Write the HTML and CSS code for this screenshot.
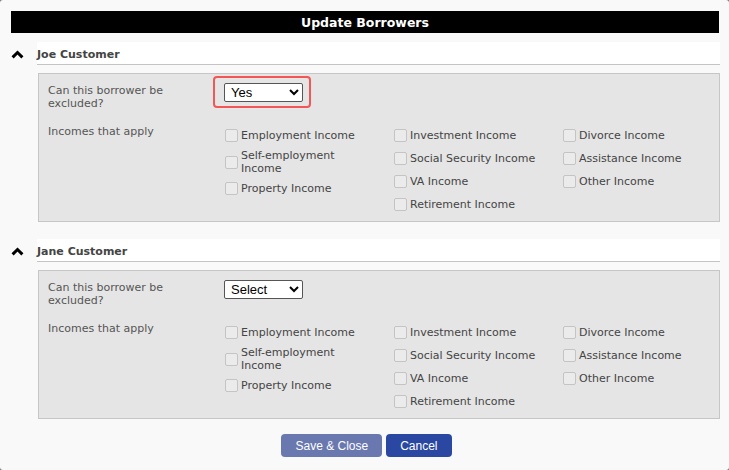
FILE: index.html
```html
<!DOCTYPE html>
<html>
<head>
<meta charset="utf-8">
<link rel="stylesheet" href="styles.css">
</head>
<body>
<div class="dialog">
  <div class="titlebar">Update Borrowers</div>

  <section class="borrower">
    <div class="toggle"><svg width="13" height="9" viewBox="0 0 13 9"><polyline points="1.6,7.4 6.5,2.5 11.4,7.4" fill="none" stroke="#000" stroke-width="3"/></svg></div>
    <div class="content">
      <div class="bhead">Joe Customer</div>
      <div class="box">
        <div class="lbl">Can this borrower be excluded?</div>
        <div class="selcell"><span class="highlight"><select class="sel"><option>Yes</option><option>No</option></select></span></div>
        <div class="lbl">Incomes that apply</div>
        <div class="col col-narrow">
          <label class="item"><span class="cb"></span><span class="txt">Employment Income</span></label>
          <label class="item"><span class="cb"></span><span class="txt">Self-employment Income</span></label>
          <label class="item"><span class="cb"></span><span class="txt">Property Income</span></label>
        </div>
        <div class="col">
          <label class="item"><span class="cb"></span><span class="txt">Investment Income</span></label>
          <label class="item"><span class="cb"></span><span class="txt">Social Security Income</span></label>
          <label class="item"><span class="cb"></span><span class="txt">VA Income</span></label>
          <label class="item"><span class="cb"></span><span class="txt">Retirement Income</span></label>
        </div>
        <div class="col">
          <label class="item"><span class="cb"></span><span class="txt">Divorce Income</span></label>
          <label class="item"><span class="cb"></span><span class="txt">Assistance Income</span></label>
          <label class="item"><span class="cb"></span><span class="txt">Other Income</span></label>
        </div>
      </div>
    </div>
  </section>

  <section class="borrower">
    <div class="toggle"><svg width="13" height="9" viewBox="0 0 13 9"><polyline points="1.6,7.4 6.5,2.5 11.4,7.4" fill="none" stroke="#000" stroke-width="3"/></svg></div>
    <div class="content">
      <div class="bhead">Jane Customer</div>
      <div class="box">
        <div class="lbl">Can this borrower be excluded?</div>
        <div class="selcell"><select class="sel"><option>Select</option><option>Yes</option><option>No</option></select></div>
        <div class="lbl">Incomes that apply</div>
        <div class="col col-narrow">
          <label class="item"><span class="cb"></span><span class="txt">Employment Income</span></label>
          <label class="item"><span class="cb"></span><span class="txt">Self-employment Income</span></label>
          <label class="item"><span class="cb"></span><span class="txt">Property Income</span></label>
        </div>
        <div class="col">
          <label class="item"><span class="cb"></span><span class="txt">Investment Income</span></label>
          <label class="item"><span class="cb"></span><span class="txt">Social Security Income</span></label>
          <label class="item"><span class="cb"></span><span class="txt">VA Income</span></label>
          <label class="item"><span class="cb"></span><span class="txt">Retirement Income</span></label>
        </div>
        <div class="col">
          <label class="item"><span class="cb"></span><span class="txt">Divorce Income</span></label>
          <label class="item"><span class="cb"></span><span class="txt">Assistance Income</span></label>
          <label class="item"><span class="cb"></span><span class="txt">Other Income</span></label>
        </div>
      </div>
    </div>
  </section>

  <div class="actions">
    <button class="btn btn-save">Save &amp; Close</button>
    <button class="btn btn-cancel">Cancel</button>
  </div>
</div>
</body>
</html>
```

FILE: styles.css
```css
html, body {
  margin: 0;
  padding: 0;
  background: #777;
}
.dialog {
  width: 729px;
  height: 470px;
  box-sizing: border-box;
  background: #f9f9f9;
  border-radius: 3px;
  padding: 11px 9px 0 11px;
  font-family: "DejaVu Sans", Verdana, sans-serif;
  font-size: 11px;
  color: #555;
  overflow: hidden;
}
.titlebar {
  height: 22px;
  box-sizing: border-box;
  padding-top: 1px;
  margin-right: 1px;
  background: #000;
  color: #fff;
  font-weight: bold;
  font-size: 12.5px;
  line-height: 22px;
  text-align: center;
}
.borrower {
  display: flex;
  margin-top: 9px;
}
.borrower + .borrower {
  margin-top: 17px;
}
.toggle {
  width: 26px;
  flex: none;
  height: 23px;
  display: flex;
  align-items: center;
  box-sizing: border-box;
  padding-top: 1px;
}
.toggle svg { display: block; }
.content {
  flex: 1;
}
.bhead {
  height: 23px;
  box-sizing: border-box;
  padding-top: 2px;
  line-height: 21px;
  background: #fff;
  border-bottom: 1px solid #c4c4c4;
  font-weight: bold;
  color: #444;
  font-size: 11px;
}
.box {
  margin: 8px 0 0 1px;
  background: #e5e5e5;
  border: 1px solid #c6c6c6;
  padding: 10px 0 7px 9px;
  display: grid;
  grid-template-columns: 176px 169px 169px 1fr;
  row-gap: 15px;
  line-height: 13px;
  align-items: start;
}
.lbl {
  color: #555;
  width: 140px;
}
.selcell {
  grid-column: 2 / 5;
  margin-top: -1px;
}
.highlight {
  position: relative;
  display: inline-block;
}
.highlight::after {
  content: "";
  position: absolute;
  left: -11px;
  right: -8px;
  top: -7px;
  bottom: -6px;
  border: 2px solid #f25656;
  border-radius: 4px;
  pointer-events: none;
}
.sel {
  display: block;
  width: 79px;
  height: 19px;
  font-family: "Liberation Sans", Arial, sans-serif;
  font-size: 13px;
  color: #000;
  background: #fff;
  border: 1px solid #555;
  border-radius: 2px;
  padding: 0 0 0 2px;
}
.col {
  display: flex;
  flex-direction: column;
  gap: 4px;
  margin-top: 1px;
}
.col-narrow .txt {
  max-width: 118px;
}
.item {
  display: flex;
  align-items: center;
  min-height: 19px;
  color: #444;
}
.cb {
  flex: none;
  width: 11px;
  height: 11px;
  margin: 0 3px 0 1px;
  background: #ebebeb;
  border: 1px solid #c4c4c4;
  border-radius: 2px;
}
.actions {
  display: flex;
  justify-content: center;
  gap: 4px;
  margin-top: 15px;
  padding-left: 2px;
}
.btn {
  height: 23px;
  padding: 0 14px;
  border: none;
  border-radius: 4px;
  color: #fff;
  font-family: "Liberation Sans", Arial, sans-serif;
  font-size: 12px;
}
.btn-save {
  background: #6a78b0;
}
.btn-cancel {
  background: #2a48a2;
}
```
